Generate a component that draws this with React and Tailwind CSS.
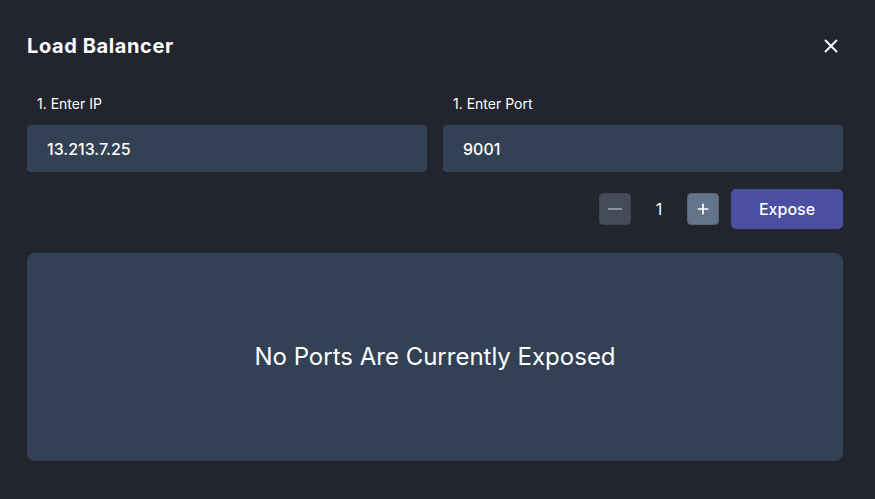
import { X, Plus } from 'lucide-react';

export default function App() {
  return (
    <div className="h-[499px] w-[875px] bg-[#23252e] pl-[27px] pr-[32px] pt-[33px] text-white" style={{ fontFamily: 'Inter, "Noto Sans", sans-serif' }}>
      <div className="flex items-center justify-between">
        <h1 className="text-[20px] font-bold leading-[26px] tracking-[0.6px]">Load Balancer</h1>
        <button className="mr-[1px] text-white"><X size={22} strokeWidth={2} /></button>
      </div>

      <div className="mt-[36px] grid grid-cols-2 gap-4">
        <div>
          <label className="block pl-[10px] text-[14px] leading-[18px]">1. Enter IP</label>
          <input
            className="mt-[12px] h-[47px] w-full rounded-[4px] bg-[#334155] px-5 text-[16px] font-medium text-white outline-none"
            defaultValue="13.213.7.25"
          />
        </div>
        <div>
          <label className="block pl-[10px] text-[14px] leading-[18px]">1. Enter Port</label>
          <input
            className="mt-[12px] h-[47px] w-full rounded-[4px] bg-[#334155] px-5 text-[16px] font-medium text-white outline-none"
            defaultValue="9001"
          />
        </div>
      </div>

      <div className="mt-[17px] flex items-center justify-end">
        <button className="flex h-[32px] w-[32px] items-center justify-center rounded-[4px] border border-[#3e4451] bg-[#454b5a]">
          <span className="block h-[2px] w-[14px] bg-[#8a909c]" />
        </button>
        <span className="w-[56px] text-center text-[16px]">1</span>
        <button className="flex h-[32px] w-[32px] items-center justify-center rounded-[4px] border border-[#566379] bg-[#64748b] text-white">
          <Plus size={16} strokeWidth={2.5} />
        </button>
        <button className="ml-[12px] h-[40px] w-[112px] rounded-[5px] bg-[#4a4fa3] text-[16px] font-medium">Expose</button>
      </div>

      <div className="mt-[24px] flex h-[208px] items-center justify-center rounded-lg bg-[#334155]">
        <p className="text-[24px]">No Ports Are Currently Exposed</p>
      </div>
    </div>
  );
}
